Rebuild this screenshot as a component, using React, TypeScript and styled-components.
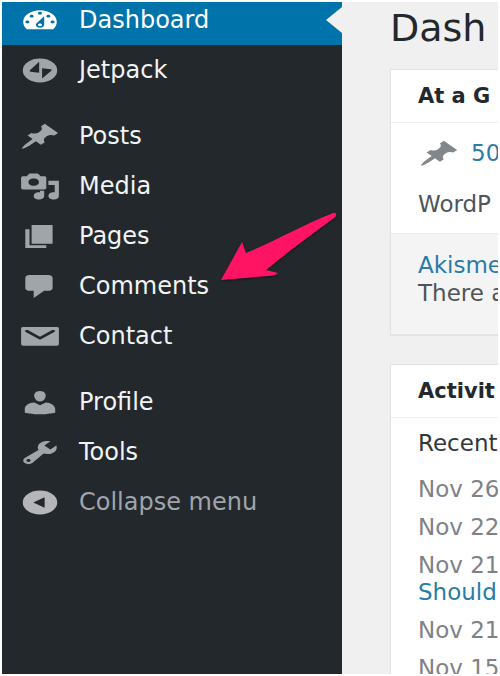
import React from "react";
import styled, { createGlobalStyle, css } from "styled-components";

const GlobalStyle = createGlobalStyle`
  *, *::before, *::after { box-sizing: border-box; }
  body {
    margin: 0;
    background: #fff;
    font-family: "DejaVu Sans", "Open Sans", sans-serif;
    font-size: 23px;
    line-height: 28px;
    color: #50545a;
  }
  a { color: #2a7ba6; text-decoration: none; }
  h1, h2, h3, p, ul { margin: 0; padding: 0; font-weight: 400; }
  ul { list-style: none; }
`;

const Frame = styled.div`
  height: 100vh;
  padding: 2px;
`;

const Screen = styled.div`
  position: relative;
  display: flex;
  height: 100%;
  overflow: hidden;
  background: #f0f0f0;
`;

const Sidebar = styled.nav`
  flex: 0 0 340px;
  background: #23282d;
`;

const MenuGroup = styled.ul`
  & + & {
    margin-top: 16px;
  }
`;

const entryStyle = css`
  position: relative;
  display: flex;
  align-items: center;
  gap: 18px;
  width: 100%;
  height: 50px;
  padding: 0 0 0 17px;
  font: inherit;
  font-size: 24px;
  white-space: nowrap;
`;

const MenuLink = styled.a<{ $active?: boolean }>`
  ${entryStyle}
  color: #f1f3f4;
  ${({ $active }) =>
    $active &&
    css`
      height: 43px;
      padding-bottom: 7px;
      background: #0073aa;
      color: #fff;
    `}
`;

const CollapseButton = styled.button`
  ${entryStyle}
  border: 0;
  background: none;
  color: #a0a5aa;
  cursor: pointer;
`;

const Notch = styled.span`
  position: absolute;
  top: 5px;
  right: 0;
  border: solid transparent;
  border-width: 13px 16px 13px 0;
  border-right-color: #f0f0f0;
`;

const Icon = styled.svg<{ $tone: string }>`
  flex: none;
  width: 42px;
  height: 29px;
  fill: ${({ $tone }) => $tone};
`;

const Pointer = styled.svg`
  position: absolute;
  top: 208px;
  left: 216px;
  width: 122px;
  height: 76px;
  pointer-events: none;
  filter: drop-shadow(0 1px 1px rgba(0, 0, 0, 0.5));
`;

const Content = styled.main`
  flex: 1;
  min-width: 0;
  overflow: hidden;
  padding-left: 48px;
  white-space: nowrap;
`;

const Title = styled.h1`
  height: 67px;
  font-size: 38px;
  line-height: 52px;
  color: #23282d;
`;

const Card = styled.section`
  margin-bottom: 29px;
  border: 1px solid #e2e2e2;
  border-width: 1px 0 1px 1px;
  background: #fff;
  box-shadow: 0 1px 1px rgba(0, 0, 0, 0.05);
`;

const CardTitle = styled.h2`
  height: 53px;
  padding-left: 27px;
  border-bottom: 1px solid #eee;
  font-size: 21px;
  font-weight: 700;
  line-height: 53px;
  color: #23282d;
`;

const Summary = styled.div`
  height: 110px;
  padding: 15px 0 0 27px;
`;

const CountLink = styled.a`
  display: flex;
  align-items: center;
  gap: 11px;
  height: 30px;
  margin-bottom: 22px;
`;

const Notice = styled.div`
  height: 101px;
  padding: 17px 0 0 27px;
  border-top: 1px solid #eee;
  background: #f4f4f4;
`;

const Activity = styled.div`
  padding: 11px 0 12px 27px;
`;

const ActivityTitle = styled.h3`
  margin-bottom: 19px;
  font-size: 23px;
  color: #32373c;
`;

const ActivityItem = styled.li`
  margin-bottom: 11px;
  line-height: 27px;
`;

const DateText = styled.span`
  display: block;
  color: #7d8287;
`;

const shapes = {
  dashboard:
    "M3.76 16h12.48c1.1-1.37 1.76-3.11 1.76-5 0-4.42-3.58-8-8-8s-8 3.58-8 8c0 1.89.66 3.63 1.76 5zM10 4c.55 0 1 .45 1 1s-.45 1-1 1-1-.45-1-1 .45-1 1-1zM6 6c.55 0 1 .45 1 1s-.45 1-1 1-1-.45-1-1 .45-1 1-1zm8 0c.55 0 1 .45 1 1s-.45 1-1 1-1-.45-1-1 .45-1 1-1zm-5.37 5.55L12 7v6c0 1.1-.9 2-2 2s-2-.9-2-2c0-.57.24-1.08.63-1.45zM4 10c.55 0 1 .45 1 1s-.45 1-1 1-1-.45-1-1 .45-1 1-1zm12 0c.55 0 1 .45 1 1s-.45 1-1 1-1-.45-1-1 .45-1 1-1zm-5 3c0-.55-.45-1-1-1s-1 .45-1 1 .45 1 1 1 1-.45 1-1z",
  jetpack:
    "M10 1.8a8.2 8.2 0 1 0 0 16.4A8.2 8.2 0 0 0 10 1.8zM9.6 4v7.6L5.4 10.8Q4.7 10.5 5.2 9.8zM11 15.6V8.4l4.2.8q.7.3.2 1z",
  pin: "M10.44 3.02l1.82-1.82 6.36 6.35-1.83 1.82c-1.05-.68-2.48-.57-3.41.36l-.75.75c-.92.93-1.04 2.35-.35 3.41l-1.83 1.82-2.41-2.41-2.8 2.79c-.42.42-3.38 2.71-3.8 2.29s1.86-3.39 2.28-3.81l2.79-2.79L4.1 9.36l1.83-1.82c1.05.69 2.48.57 3.4-.36l.75-.75c.93-.92 1.05-2.35.36-3.41z",
  media:
    "M13 11V4c0-.55-.45-1-1-1h-1.67L9 1H5L3.67 3H2c-.55 0-1 .45-1 1v7c0 .55.45 1 1 1h10c.55 0 1-.45 1-1zM7 4.5c1.38 0 2.5 1.12 2.5 2.5S8.38 9.5 7 9.5 4.5 8.38 4.5 7 5.62 4.5 7 4.5zM14 6h5v10.5c0 1.38-1.12 2.5-2.5 2.5S14 17.88 14 16.5s1.12-2.5 2.5-2.5c.17 0 .34.02.5.05V9h-3V6zm-4 8.05V13h2v3.5c0 1.38-1.12 2.5-2.5 2.5S7 17.88 7 16.5 8.12 14 9.5 14c.17 0 .34.02.5.05z",
  pages: "M6 15V2h10v13H6zm-1 1h8v2H3V5h2v11z",
  comment:
    "M5 2h9c1.1 0 2 .9 2 2v7c0 1.1-.9 2-2 2h-2l-5 5v-5H5c-1.1 0-2-.9-2-2V4c0-1.1.9-2 2-2z",
  mail: "M2 3.4h16q1 0 1 1v11q0 1-1 1H2q-1 0-1-1v-11q0-1 1-1zM3.2 5.6q-.7.6 0 1.3L10 12.3l6.8-5.4q.7-.7 0-1.3-.5-.3-1 0L10 10.2 4.2 5.6q-.5-.3-1 0z",
  user: "M10 9.25c-2.27 0-2.73-3.44-2.73-3.44C7 4.02 7.82 2 9.97 2c2.16 0 2.98 2.02 2.71 3.81 0 0-.41 3.44-2.68 3.44zm0 2.57L12.72 10c2.39 0 4.52 2.33 4.52 4.53v2.49s-3.65 1.13-7.24 1.13c-3.65 0-7.24-1.13-7.24-1.13v-2.49c0-2.25 1.94-4.48 4.47-4.48z",
  wrench:
    "M16.68 9.77c-1.34 1.34-3.3 1.67-4.95.99l-5.41 6.52c-.99.99-2.59.99-3.58 0s-.99-2.59 0-3.57l6.52-5.42c-.68-1.65-.35-3.61.99-4.95 1.28-1.28 3.12-1.62 4.72-1.06l-2.89 2.89 2.82 2.82 2.86-2.87c.53 1.58.18 3.39-1.08 4.65zM3.81 16.21c.4.39 1.04.39 1.43 0 .4-.4.4-1.04 0-1.43-.39-.4-1.03-.4-1.43 0-.39.39-.39 1.03 0 1.43z",
  collapse: "M10 1.8a8.2 8.2 0 1 0 0 16.4A8.2 8.2 0 0 0 10 1.8zM12.2 6.4v7.2L6.8 10z",
};

type Shape = keyof typeof shapes;

function Glyph({ shape, tone = "#a0a5aa" }: { shape: Shape; tone?: string }) {
  return (
    <Icon $tone={tone} viewBox="0 0 20 20" preserveAspectRatio="none" aria-hidden="true">
      <path fillRule="evenodd" d={shapes[shape]} />
    </Icon>
  );
}

interface Entry {
  label: string;
  shape: Shape;
  active?: boolean;
}

const groups: Entry[][] = [
  [
    { label: "Dashboard", shape: "dashboard", active: true },
    { label: "Jetpack", shape: "jetpack" },
  ],
  [
    { label: "Posts", shape: "pin" },
    { label: "Media", shape: "media" },
    { label: "Pages", shape: "pages" },
    { label: "Comments", shape: "comment" },
    { label: "Contact", shape: "mail" },
  ],
  [
    { label: "Profile", shape: "user" },
    { label: "Tools", shape: "wrench" },
  ],
];

const activity: { date: string; link?: string }[] = [
  { date: "Nov 26" },
  { date: "Nov 22" },
  { date: "Nov 21", link: "Should" },
  { date: "Nov 21" },
  { date: "Nov 15" },
];

export default function App() {
  return (
    <>
      <GlobalStyle />
      <Frame>
        <Screen>
          <Sidebar aria-label="Main menu">
            {groups.map((entries, index) => (
              <MenuGroup key={index}>
                {entries.map(({ label, shape, active }) => (
                  <li key={label}>
                    <MenuLink href="#" $active={active} aria-current={active ? "page" : undefined}>
                      <Glyph shape={shape} tone={active ? "#fff" : undefined} />
                      {label}
                      {active && <Notch />}
                    </MenuLink>
                  </li>
                ))}
              </MenuGroup>
            ))}
            <CollapseButton type="button">
              <Glyph shape="collapse" tone="#b4b6b8" />
              Collapse menu
            </CollapseButton>
          </Sidebar>
          <Content>
            <Title>Dash</Title>
            <Card>
              <CardTitle>At a G</CardTitle>
              <Summary>
                <CountLink href="#">
                  <Glyph shape="pin" tone="#82878c" />
                  50
                </CountLink>
                <p>WordP</p>
              </Summary>
              <Notice>
                <a href="#">Akisme</a>
                <p>There a</p>
              </Notice>
            </Card>
            <Card>
              <CardTitle>Activit</CardTitle>
              <Activity>
                <ActivityTitle>Recent</ActivityTitle>
                <ul>
                  {activity.map(({ date, link }, index) => (
                    <ActivityItem key={index}>
                      <DateText>{date}</DateText>
                      {link && <a href="#">{link}</a>}
                    </ActivityItem>
                  ))}
                </ul>
              </Activity>
            </Card>
          </Content>
          <Pointer viewBox="0 0 122 76" aria-hidden="true">
            <path
              fill="#ff1464"
              d="M3 70L24 32L28 43C62 29 84 15 115 3Q119 2 118 6L116 8C94 24 70 42 48 60L60 63Q58 66 50 66Z"
            />
          </Pointer>
        </Screen>
      </Frame>
    </>
  );
}
